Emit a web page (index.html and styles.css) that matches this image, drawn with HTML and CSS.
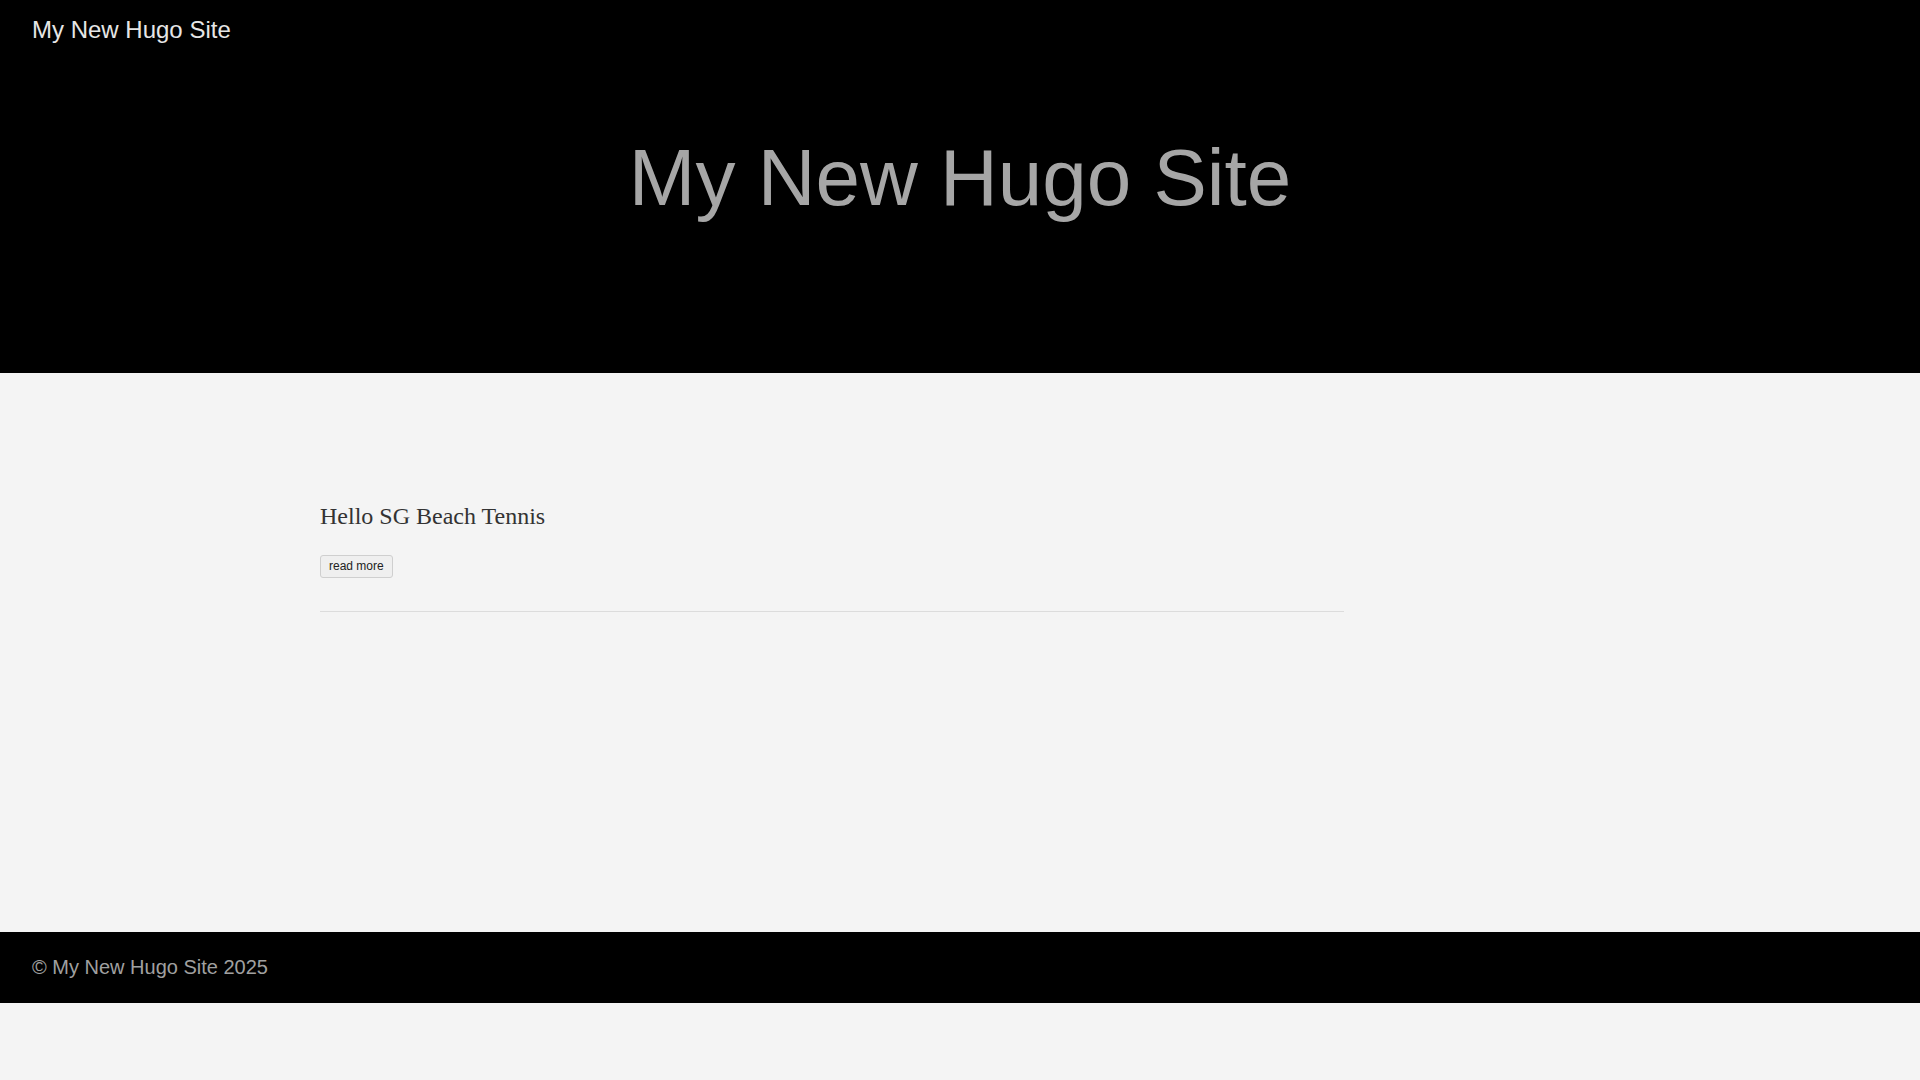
FILE: index.html
```html
<!DOCTYPE html>
<html lang="en">
<head>
<meta charset="utf-8">
<title>My New Hugo Site</title>
<link rel="stylesheet" href="styles.css">
</head>
<body>
<header class="site-header">
  <nav class="nav">
    <a class="nav-title" href="#">My New Hugo Site</a>
  </nav>
  <div class="hero">
    <h1 class="hero-title">My New Hugo Site</h1>
  </div>
</header>
<main class="main">
  <div class="container">
    <div class="content">
      <article class="post">
        <h2 class="post-title">Hello SG Beach Tennis</h2>
        <a class="read-more" href="#">read more</a>
      </article>
      <hr class="divider">
    </div>
  </div>
</main>
<footer class="site-footer">
  <p class="copyright">© My New Hugo Site 2025</p>
</footer>
</body>
</html>
```

FILE: styles.css
```css
html, body {
  margin: 0;
  padding: 0;
}
body {
  background: #f4f4f4;
  font-family: "Liberation Sans", Arial, sans-serif;
  color: #333;
}
.site-header {
  background: #000;
  height: 373px;
  box-sizing: border-box;
}
.nav {
  padding: 16px 32px 0;
  height: 27px;
}
.nav-title {
  font-size: 24px;
  line-height: 1.2;
  color: #e6e6e6;
  text-decoration: none;
}
.hero {
  padding-top: 89px;
  text-align: center;
}
.hero-title {
  margin: 0;
  font-size: 80px;
  font-weight: normal;
  line-height: 92px;
  color: #a6a6a6;
}
.main {
  min-height: 559px;
  box-sizing: border-box;
  padding-top: 129px;
}
.container {
  width: 1280px;
  margin: 0 auto;
}
.content {
  width: 80%;
}
.post-title {
  margin: 0;
  font-family: "Liberation Serif", "Times New Roman", serif;
  font-size: 24px;
  font-weight: normal;
  line-height: 1.2;
  color: #333;
}
.read-more {
  display: inline-block;
  margin-top: 24px;
  padding: 3px 8px;
  font-size: 12px;
  line-height: 15px;
  color: #222;
  background: #efefef;
  border: 1px solid #cfcfcf;
  border-radius: 3px;
  text-decoration: none;
}
.divider {
  margin: 33px 0 0;
  border: 0;
  border-top: 1px solid #dcdcdc;
  height: 0;
}
.site-footer {
  background: #000;
  padding: 23px 32px 24px;
}
.copyright {
  margin: 0;
  font-size: 20px;
  line-height: 24px;
  color: #a0a0a0;
}
```
